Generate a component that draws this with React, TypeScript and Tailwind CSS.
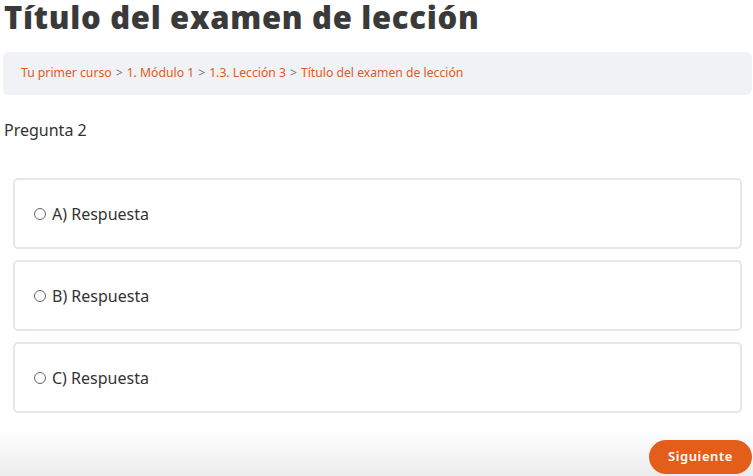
export default function App() {
  const answers = ["A) Respuesta", "B) Respuesta", "C) Respuesta"]

  return (
    <div className="w-[753px] h-[476px] overflow-hidden bg-white flex flex-col font-['Noto_Sans',sans-serif] text-[#333]">
      <div className="flex-1 pl-1 pr-[1px]">
        {/* Title */}
        <h1 className="font-['Open_Sans',sans-serif] font-extrabold text-[31px] leading-[35px] text-[#3a3a3a] tracking-[0.7px]">
          Título del examen de lección
        </h1>

        {/* Breadcrumb */}
        <div className="mt-[17px] -ml-[1px] h-[43px] rounded-md bg-[#f0f2f5] flex items-center px-[18px] text-[12.2px] text-[#e05a1c]">
          <span>Tu primer curso</span>
          <span className="mx-1 text-[#777]">&gt;</span>
          <span>1. Módulo 1</span>
          <span className="mx-1 text-[#777]">&gt;</span>
          <span>1.3. Lección 3</span>
          <span className="mx-1 text-[#777]">&gt;</span>
          <span>Título del examen de lección</span>
        </div>

        {/* Question */}
        <p className="mt-[24px] text-[16px] leading-[22px] text-[#333]">Pregunta 2</p>

        {/* Answers */}
        <div className="mt-[37px] ml-[9px] mr-[10px] flex flex-col gap-[11px]">
          {answers.map((a) => (
            <label
              key={a}
              className="h-[71px] rounded-[5px] border-2 border-[#e4e7eb] flex items-center pl-[19px] text-[16px] text-[#333]"
            >
              <span className="w-[12px] h-[12px] rounded-full border border-[#666] mr-[6px]" />
              {a}
            </label>
          ))}
        </div>
      </div>

      {/* Footer */}
      <div className="h-[46px] bg-gradient-to-b from-white to-[#ececec] flex items-end justify-end pb-[2px] pr-[1px]">
        <button className="h-[34px] w-[103px] rounded-full bg-[#e35d1b] text-white text-[13px] font-semibold tracking-[0.6px] font-['Noto_Sans',sans-serif]">
          Siguiente
        </button>
      </div>
    </div>
  )
}
